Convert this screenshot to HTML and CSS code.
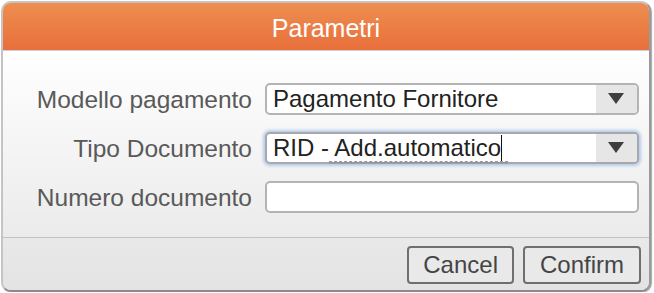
FILE: index.html
```html
<!DOCTYPE html>
<html lang="it">
<head>
<meta charset="utf-8">
<title>Parametri</title>
<link rel="stylesheet" href="styles.css">
</head>
<body>
<div class="dialog">
  <div class="dialog-header">Parametri</div>
  <div class="dialog-body">
    <div class="form-grid">
      <label class="field-label">Modello pagamento</label>
      <div class="select">
        <span class="select-value">Pagamento Fornitore</span>
        <span class="select-arrow"><span class="triangle"></span></span>
      </div>

      <label class="field-label">Tipo Documento</label>
      <div class="select focused">
        <span class="select-value">RID - Add.automatico<span class="caret"></span></span>
        <span class="select-arrow"><span class="triangle"></span></span>
        <span class="ime-underline"></span>
      </div>

      <label class="field-label">Numero documento</label>
      <div class="text-input"></div>
    </div>
  </div>
  <div class="dialog-footer">
    <button class="btn">Cancel</button>
    <button class="btn">Confirm</button>
  </div>
</div>
</body>
</html>
```

FILE: styles.css
```css
html, body {
  margin: 0;
  padding: 0;
  background: #ffffff;
  font-family: "Liberation Sans", Arial, Helvetica, sans-serif;
}

.dialog {
  width: 646px;
  margin: 1px 3px 0 1px;
  border: 2px solid #c4c4c4;
  border-right-color: #9a9a9a;
  border-bottom-color: #8a8a8a;
  border-radius: 10px;
  box-shadow: 1px 1px 1px rgba(0, 0, 0, 0.35);
  overflow: hidden;
  background: #ececec;
}

.dialog-header {
  height: 45px;
  padding-top: 2px;
  border-bottom: 1px solid #cfcfcf;
  background: linear-gradient(#ee8e50, #e86f3b);
  color: #ffffff;
  font-size: 25px;
  line-height: 47px;
  text-align: center;
}

.dialog-body {
  height: 156px;
  padding: 30px 10px 0 0;
  background: linear-gradient(#ffffff, #ebebeb);
  border-bottom: 1px solid #c2c2c2;
}

.form-grid {
  display: grid;
  grid-template-columns: 1fr 374px;
  column-gap: 13px;
  row-gap: 14px;
  align-items: center;
}

.field-label {
  text-align: right;
  font-size: 24.5px;
  color: #595959;
  line-height: 32px;
  padding-top: 3px;
}

.select,
.text-input {
  position: relative;
  height: 28px;
  border: 2px solid #b4b4b4;
  border-radius: 5px;
  background: #ffffff;
  display: flex;
  align-items: center;
}

.select.focused {
  border-color: #a8a8a8;
  box-shadow: 0 0 3px 2px rgba(130, 170, 230, 0.55);
}

.select-value {
  flex: 1;
  padding-left: 6px;
  font-size: 24px;
  color: #222222;
  line-height: 28px;
  white-space: nowrap;
}

.caret {
  display: inline-block;
  width: 1px;
  height: 26px;
  background: #111111;
  vertical-align: -5px;
}

.select-arrow {
  width: 41px;
  height: 100%;
  background: #e6e6e6;
  border-radius: 0 3px 3px 0;
  display: flex;
  align-items: center;
  justify-content: center;
}

.triangle {
  width: 0;
  height: 0;
  border-left: 8px solid transparent;
  border-right: 8px solid transparent;
  border-top: 11px solid #3e3e3e;
  margin-right: 1px;
}

.ime-underline {
  position: absolute;
  left: 62px;
  top: 27px;
  width: 179px;
  height: 0;
  border-bottom: 1px dashed #9a9a9a;
  box-shadow: 0 1px 2px rgba(0, 0, 0, 0.25);
}

.dialog-footer {
  height: 44px;
  padding: 8px 8px 0 0;
  background: linear-gradient(#e9e9e9, #e3e3e3);
  display: flex;
  justify-content: flex-end;
  align-items: flex-start;
  gap: 9px;
}

.btn {
  height: 38px;
  padding: 0 14px;
  border: 2px solid #6f6f6f;
  border-radius: 4px;
  background: #e9e9e9;
  font-family: "Liberation Sans", Arial, Helvetica, sans-serif;
  font-size: 24px;
  color: #454545;
  line-height: 34px;
}

.btn + .btn {
  padding: 0 15px;
}
```
